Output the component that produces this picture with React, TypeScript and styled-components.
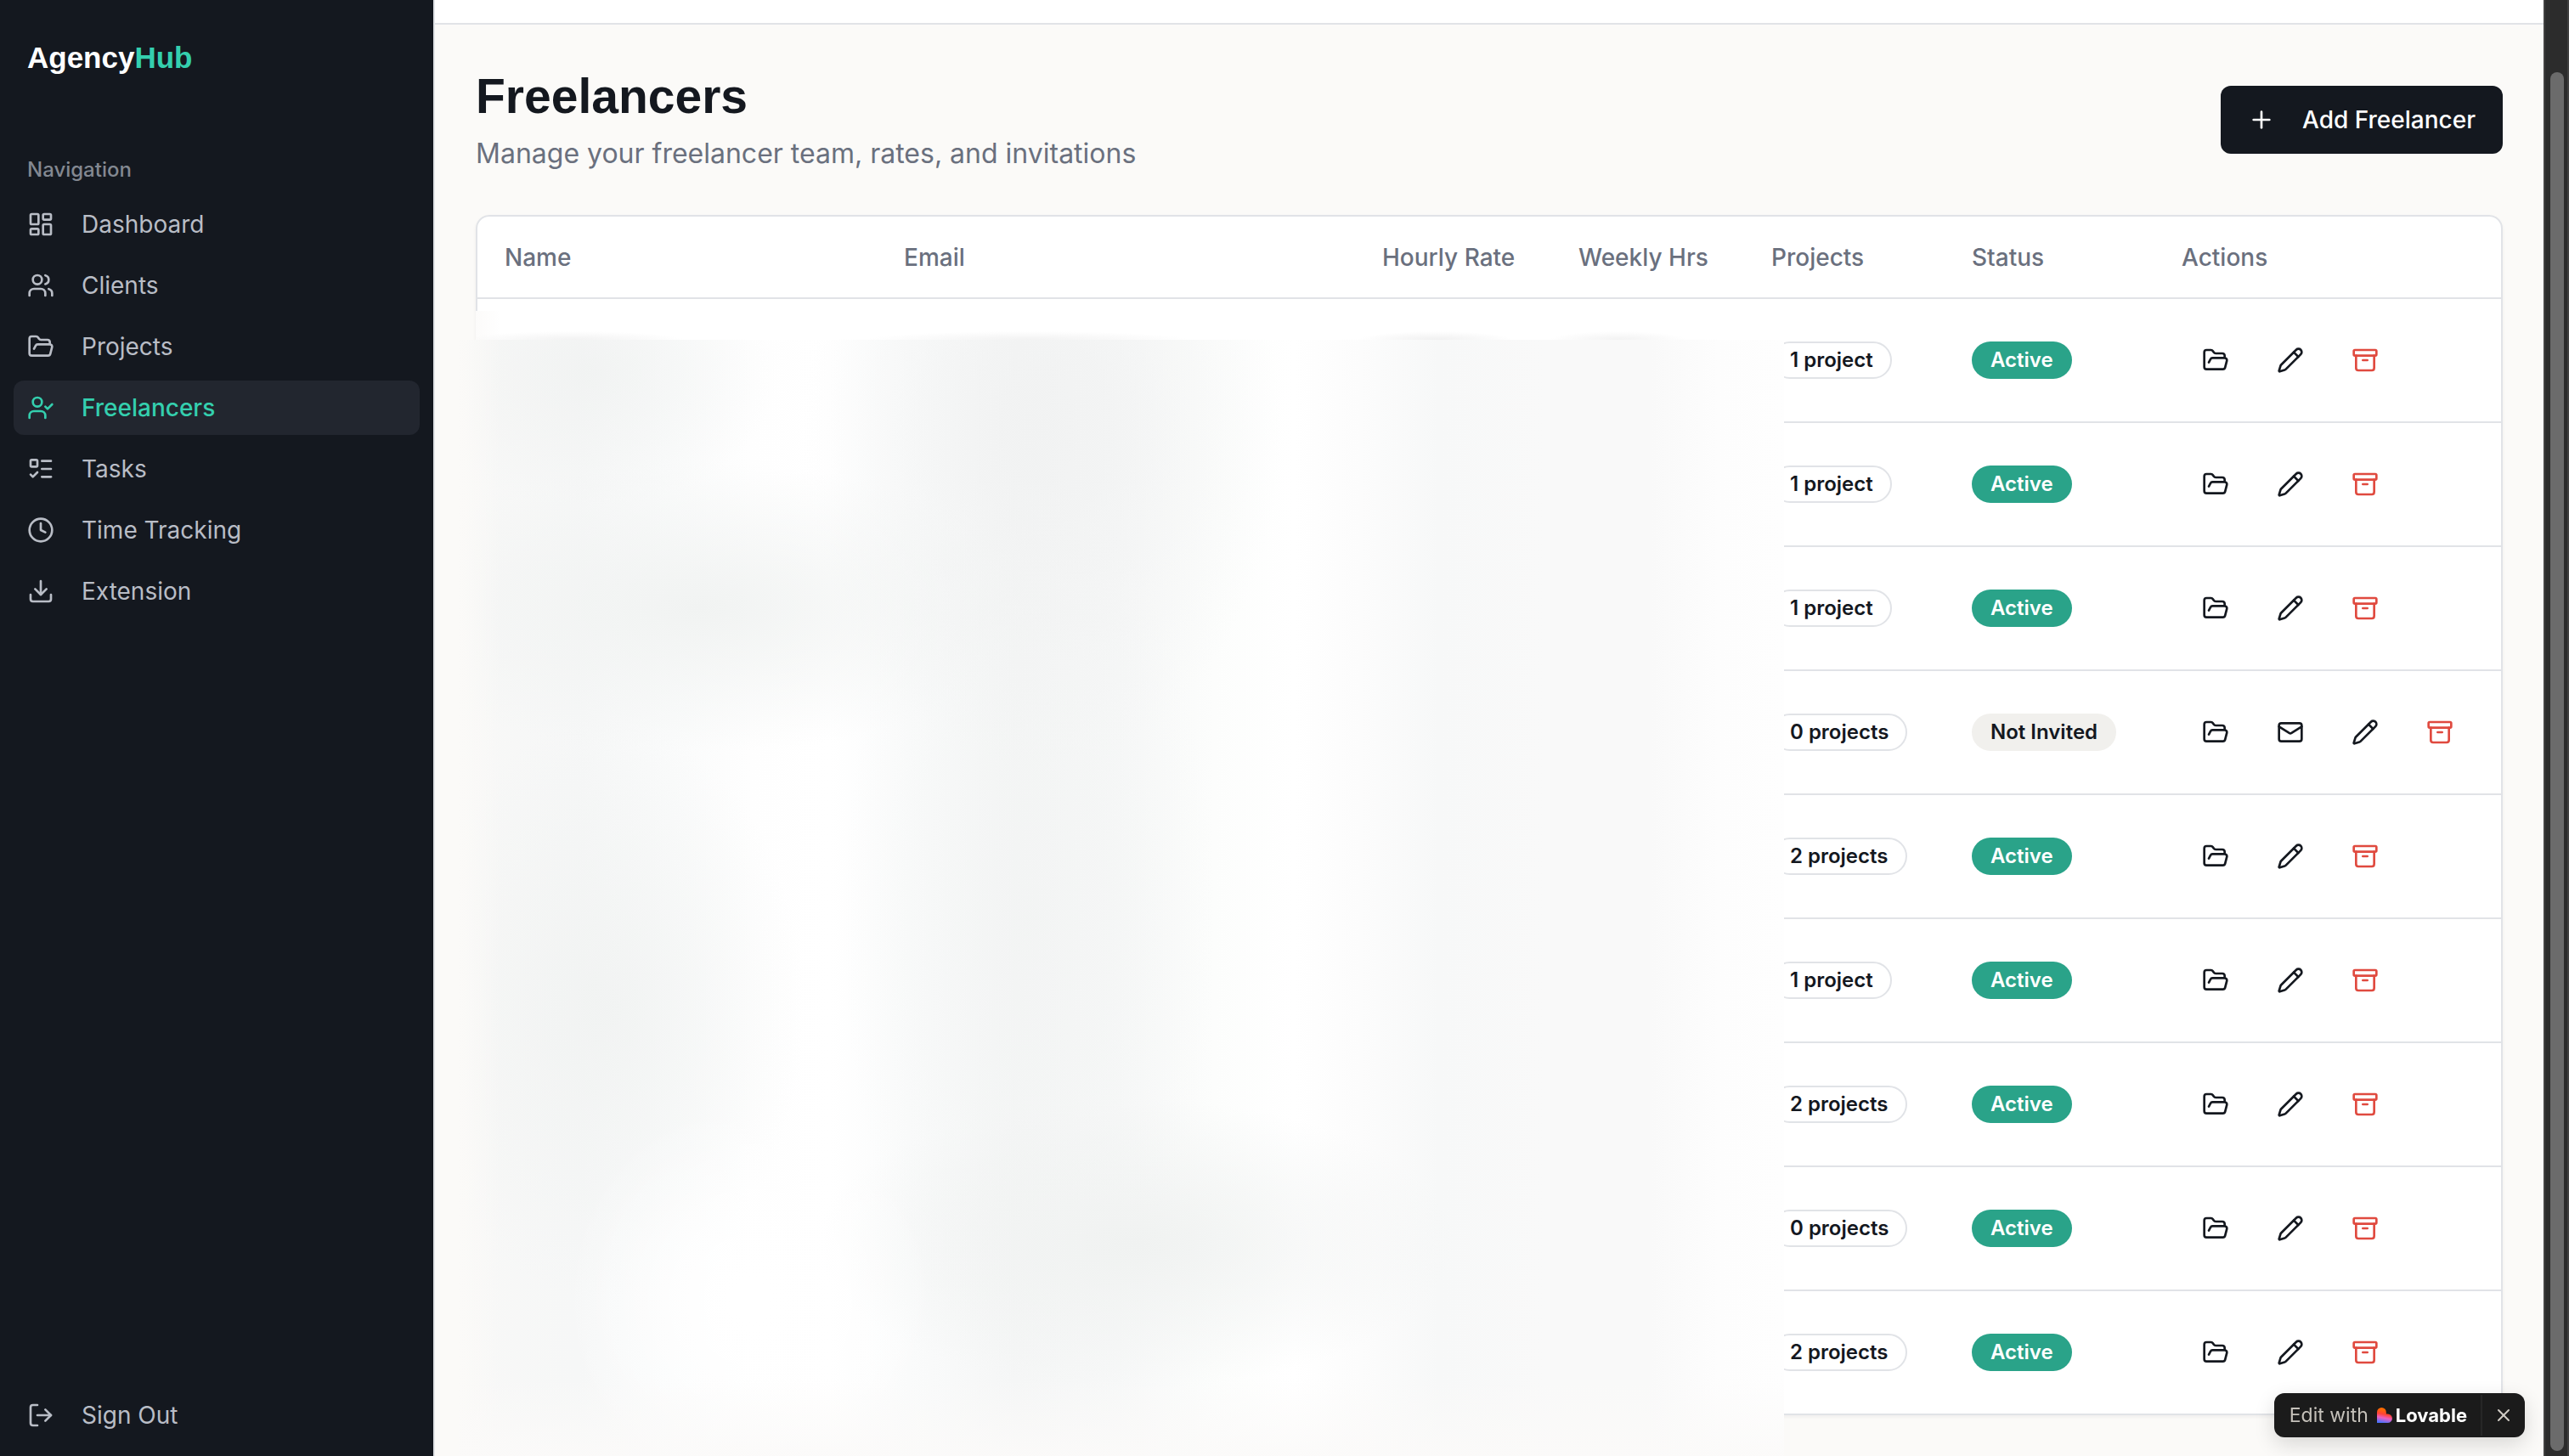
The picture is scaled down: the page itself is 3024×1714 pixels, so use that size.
import React from "react";
import styled, { createGlobalStyle, css } from "styled-components";
import {
  Archive,
  Clock,
  Download,
  FolderOpen,
  LayoutDashboard,
  ListTodo,
  LogOut,
  Mail,
  Pencil,
  Plus,
  UserCheck,
  Users,
  X,
} from "lucide-react";

const ink = "#14181f";
const line = "#e1e3e7";
const muted = "#6a707e";
const canvas = "#fbfaf8";
const mint = "#34cfae";
const display = `"Liberation Sans", Helvetica, Arial, sans-serif`;

const GlobalStyle = createGlobalStyle`
  *, *::before, *::after { box-sizing: border-box; }
  body {
    margin: 0;
    background: ${canvas};
    color: ${ink};
    font-family: Inter, sans-serif;
    font-size: 28px;
    line-height: 40px;
    -webkit-font-smoothing: antialiased;
  }
  button { font: inherit; cursor: pointer; }
`;

const Shell = styled.div`
  display: flex;
  height: 100vh;
  overflow: hidden;
`;

/* Sidebar */

const Sidebar = styled.aside`
  display: flex;
  flex-direction: column;
  flex: 0 0 512px;
  background: ${ink};
  border-right: 2px solid ${line};
`;

const Brand = styled.div`
  padding: 40px 32px 48px;
  font-family: ${display};
  font-size: 35px;
  font-weight: 700;
  line-height: 56px;
  color: #ffffff;

  span {
    color: ${mint};
  }
`;

const NavGroup = styled.nav`
  flex: 1;
  padding: 24px 16px 16px;
`;

const NavHeading = styled.h2`
  margin: 0;
  padding: 0 16px;
  font-size: 24px;
  font-weight: 500;
  line-height: 64px;
  color: #838891;
`;

const NavList = styled.ul`
  display: flex;
  flex-direction: column;
  gap: 8px;
  margin: 0;
  padding: 0;
  list-style: none;
`;

const navItem = css`
  display: flex;
  align-items: center;
  gap: 32px;
  width: 100%;
  height: 64px;
  padding: 0 16px;
  border: 0;
  border-radius: 12px;
  background: transparent;
  color: #b9bdc6;
  text-decoration: none;
`;

const NavLink = styled.a<{ $active?: boolean }>`
  ${navItem}
  ${(p) =>
    p.$active &&
    css`
      background: #22262f;
      color: ${mint};
      font-weight: 500;
    `}
`;

const SidebarFooter = styled.div`
  padding: 16px;
`;

const SignOutButton = styled.button`
  ${navItem}
`;

/* Main column */

const Main = styled.main`
  flex: 1;
  min-width: 0;
  overflow: hidden;
`;

const TopStrip = styled.div`
  height: 29px;
  background: #ffffff;
  border-bottom: 2px solid ${line};
`;

const Content = styled.div`
  display: flex;
  flex-direction: column;
  gap: 48px;
  padding: 48px;
`;

const PageHeader = styled.header`
  display: flex;
  align-items: center;
  justify-content: space-between;
`;

const Title = styled.h1`
  margin: 0;
  font-family: ${display};
  font-size: 57px;
  font-weight: 700;
  line-height: 72px;
`;

const Subtitle = styled.p`
  margin: 8px 0 0;
  font-size: 32px;
  line-height: 48px;
  color: ${muted};
`;

const AddButton = styled.button`
  display: flex;
  align-items: center;
  gap: 32px;
  height: 80px;
  padding: 0 32px;
  border: 0;
  border-radius: 12px;
  background: ${ink};
  color: #ffffff;
  font-weight: 500;
`;

/* Table */

const Card = styled.section`
  position: relative;
  border: 2px solid ${line};
  border-radius: 16px;
  background: #ffffff;
  box-shadow: 0 2px 4px rgba(20, 24, 31, 0.05);
`;

const Table = styled.table`
  width: 100%;
  table-layout: fixed;
  border-collapse: separate;
  border-spacing: 0;
`;

const Th = styled.th`
  height: 97px;
  padding: 0 32px;
  border-bottom: 2px solid ${line};
  color: ${muted};
  font-weight: 500;
  text-align: left;
  white-space: nowrap;
`;

const Td = styled.td`
  height: 146px;
  padding: 0 32px;
  border-bottom: 2px solid ${line};
  white-space: nowrap;

  tr:last-child > & {
    height: 144px;
    border-bottom: 0;
  }
`;

const Badge = styled.span<{ $tone: "outline" | "active" | "idle" }>`
  display: inline-flex;
  align-items: center;
  height: 44px;
  padding: 0 20px;
  border: 2px solid transparent;
  border-radius: 22px;
  font-size: 24px;
  font-weight: 600;
  line-height: 32px;
  vertical-align: middle;
  ${(p) => p.$tone === "outline" && css`border-color: ${line};`}
  ${(p) => p.$tone === "active" && css`background: #2aa389; color: #ffffff;`}
  ${(p) => p.$tone === "idle" && css`background: #f1f0ed;`}
`;

const Actions = styled.div`
  display: flex;
  gap: 8px;
`;

const IconButton = styled.button<{ $danger?: boolean }>`
  display: grid;
  place-items: center;
  width: 80px;
  height: 72px;
  padding: 0;
  border: 0;
  border-radius: 12px;
  background: transparent;
  color: ${(p) => (p.$danger ? "#e04a3f" : ink)};
`;

/* Privacy veil over the personal columns */

const VeilEdge = styled.div`
  position: absolute;
  top: 111px;
  left: -2px;
  right: 844px;
  height: 34px;
  background:
    radial-gradient(ellipse 130px 10px at 115px 34px, #f2f2f2, transparent),
    radial-gradient(ellipse 190px 10px at 650px 34px, #f2f2f2, transparent),
    radial-gradient(ellipse 90px 10px at 1130px 34px, #f0f0f0, transparent),
    radial-gradient(ellipse 80px 10px at 1345px 34px, #f2f2f2, transparent),
    linear-gradient(90deg, #fcfbfa, #ffffff 30px);
`;

const Veil = styled.div`
  position: absolute;
  top: 145px;
  bottom: -50px;
  left: -22px;
  right: 844px;
  background:
    linear-gradient(180deg, transparent 93%, rgba(251, 250, 249, 0.9) 100%),
    linear-gradient(90deg, ${canvas}, rgba(251, 250, 248, 0) 50px),
    radial-gradient(ellipse 14% 18% at 22% 86%, #ffffff 10%, rgba(255, 255, 255, 0)),
    radial-gradient(ellipse 14% 12% at 10% 3%, rgba(238, 240, 239, 0.6), transparent),
    radial-gradient(ellipse 26% 13% at 18% 24%, rgba(241, 243, 242, 1), transparent),
    radial-gradient(ellipse 15% 26% at 11% 60%, rgba(240, 242, 241, 0.8), transparent),
    radial-gradient(ellipse 18% 30% at 44% 8%, rgba(240, 241, 241, 0.8), transparent),
    radial-gradient(ellipse 14% 40% at 43% 52%, rgba(241, 243, 242, 0.6), transparent),
    radial-gradient(ellipse 24% 13% at 51% 81%, rgba(240, 242, 241, 1), transparent),
    linear-gradient(
      90deg,
      #f8f8f7 0%,
      #f6f7f7 9%,
      #fafbfb 16%,
      #fefefe 22%,
      #ffffff 28%,
      #fafbfb 34%,
      #f5f6f6 42%,
      #f7f8f8 50%,
      #fcfdfc 57%,
      #ffffff 63%,
      #fcfcfc 68%,
      #f7f8f8 74%,
      #f9f9f9 82%,
      #f9f9f9 90%,
      #fdfdfd 95%,
      #fefefe 100%
    );
`;

/* Browser scrollbar */

const ScrollTrack = styled.div`
  display: flex;
  flex: 0 0 30px;
  padding: 85px 4px 6px 6px;
  border: solid #404040;
  border-width: 0 2px;
  background: #2c2c2c;
`;

const ScrollThumb = styled.div`
  width: 16px;
  border-radius: 8px;
  background: #6b6b6b;
`;

/* Floating editor badge */

const EditorBadge = styled.div`
  position: fixed;
  right: 52px;
  bottom: 22px;
  display: flex;
  align-items: center;
  height: 52px;
  border-radius: 12px;
  background: #1b1b1b;
  box-shadow: 0 8px 24px rgba(0, 0, 0, 0.14);
  font-size: 23px;
`;

const EditorLink = styled.a`
  display: flex;
  align-items: center;
  gap: 10px;
  height: 48px;
  padding: 0 16px 0 18px;
  border-right: 2px solid #272727;
  color: #c5c1ba;
  text-decoration: none;
`;

const Wordmark = styled.span`
  display: flex;
  align-items: center;
  gap: 4px;
  color: #ffffff;
  font-size: 22px;
  font-weight: 700;
`;

const CloseButton = styled.button`
  display: grid;
  place-items: center;
  width: 50px;
  height: 52px;
  padding: 0;
  border: 0;
  background: transparent;
  color: #d0ccc5;
`;

const HeartMark = () => (
  <svg width="18" height="18" viewBox="0 0 18 18" aria-hidden="true">
    <defs>
      <linearGradient id="heart" x1="0.6" y1="0" x2="0.4" y2="1">
        <stop offset="0.15" stopColor="#ff6a00" />
        <stop offset="0.45" stopColor="#ff4438" />
        <stop offset="0.68" stopColor="#ee5fc0" />
        <stop offset="1" stopColor="#4b73ff" />
      </linearGradient>
    </defs>
    <path
      fill="url(#heart)"
      d="M5.4 0a5.4 5.4 0 0 1 5.4 5.4v2h1.8a5.3 5.3 0 0 1 0 10.6H0V5.4A5.4 5.4 0 0 1 5.4 0Z"
    />
  </svg>
);

const navItems = [
  { label: "Dashboard", icon: LayoutDashboard },
  { label: "Clients", icon: Users },
  { label: "Projects", icon: FolderOpen },
  { label: "Freelancers", icon: UserCheck },
  { label: "Tasks", icon: ListTodo },
  { label: "Time Tracking", icon: Clock },
  { label: "Extension", icon: Download },
];

const columns = [
  { label: "Name", width: 470 },
  { label: "Email", width: 563 },
  { label: "Hourly Rate", width: 231 },
  { label: "Weekly Hrs", width: 227 },
  { label: "Projects", width: 236 },
  { label: "Status", width: 247 },
  { label: "Actions", width: 408 },
];

const freelancers = [
  { projects: 1, invited: true },
  { projects: 1, invited: true },
  { projects: 1, invited: true },
  { projects: 0, invited: false },
  { projects: 2, invited: true },
  { projects: 1, invited: true },
  { projects: 2, invited: true },
  { projects: 0, invited: true },
  { projects: 2, invited: true },
];

export default function App() {
  return (
    <>
      <GlobalStyle />
      <Shell>
        <Sidebar>
          <Brand>
            Agency<span>Hub</span>
          </Brand>
          <NavGroup>
            <NavHeading>Navigation</NavHeading>
            <NavList>
              {navItems.map(({ label, icon: Icon }) => (
                <li key={label}>
                  <NavLink href="#" $active={label === "Freelancers"}>
                    <Icon size={32} />
                    {label}
                  </NavLink>
                </li>
              ))}
            </NavList>
          </NavGroup>
          <SidebarFooter>
            <SignOutButton type="button">
              <LogOut size={32} />
              Sign Out
            </SignOutButton>
          </SidebarFooter>
        </Sidebar>

        <Main>
          <TopStrip />
          <Content>
            <PageHeader>
              <div>
                <Title>Freelancers</Title>
                <Subtitle>Manage your freelancer team, rates, and invitations</Subtitle>
              </div>
              <AddButton type="button">
                <Plus size={32} />
                Add Freelancer
              </AddButton>
            </PageHeader>

            <Card>
              <Table>
                <colgroup>
                  {columns.map((c) => (
                    <col key={c.label} width={c.width} />
                  ))}
                </colgroup>
                <thead>
                  <tr>
                    {columns.map((c) => (
                      <Th key={c.label} scope="col">
                        {c.label}
                      </Th>
                    ))}
                  </tr>
                </thead>
                <tbody>
                  {freelancers.map((f, i) => (
                    <tr key={i}>
                      <Td />
                      <Td />
                      <Td />
                      <Td />
                      <Td>
                        <Badge $tone="outline">
                          {`${f.projects} ${f.projects === 1 ? "project" : "projects"}`}
                        </Badge>
                      </Td>
                      <Td>
                        <Badge $tone={f.invited ? "active" : "idle"}>
                          {f.invited ? "Active" : "Not Invited"}
                        </Badge>
                      </Td>
                      <Td>
                        <Actions>
                          <IconButton type="button" aria-label="Projects">
                            <FolderOpen size={32} />
                          </IconButton>
                          {!f.invited && (
                            <IconButton type="button" aria-label="Invite">
                              <Mail size={32} />
                            </IconButton>
                          )}
                          <IconButton type="button" aria-label="Edit">
                            <Pencil size={32} />
                          </IconButton>
                          <IconButton type="button" aria-label="Archive" $danger>
                            <Archive size={32} />
                          </IconButton>
                        </Actions>
                      </Td>
                    </tr>
                  ))}
                </tbody>
              </Table>
              <VeilEdge />
              <Veil />
            </Card>
          </Content>
        </Main>

        <ScrollTrack>
          <ScrollThumb />
        </ScrollTrack>
      </Shell>

      <EditorBadge>
        <EditorLink href="#">
          Edit with
          <Wordmark>
            <HeartMark />
            Lovable
          </Wordmark>
        </EditorLink>
        <CloseButton type="button" aria-label="Close">
          <X size={24} strokeWidth={2} />
        </CloseButton>
      </EditorBadge>
    </>
  );
}
